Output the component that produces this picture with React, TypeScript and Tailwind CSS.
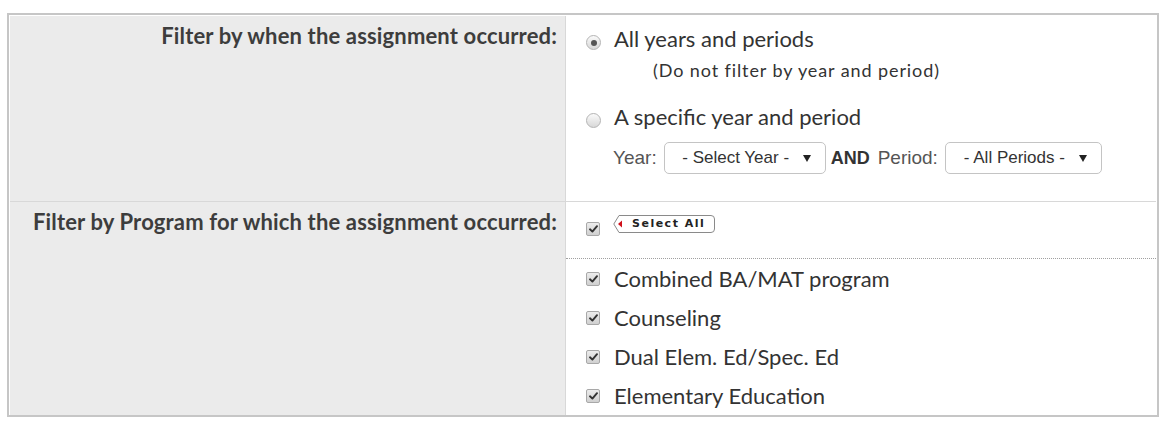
import React from "react";

const lato = { fontFamily: "Lato, 'Open Sans', sans-serif" };
const arial = { fontFamily: "'Liberation Sans', Arial, sans-serif" };

function Radio({ checked }: { checked?: boolean }) {
  return (
    <span className="mt-[9px] flex h-[15px] w-[15px] shrink-0 items-center justify-center rounded-full border border-[#b4b4b4] bg-gradient-to-b from-[#fafafa] to-[#d8d8d8]">
      {checked && <span className="h-[6px] w-[6px] rounded-full bg-[#555]" />}
    </span>
  );
}

function Check() {
  return (
    <span className="flex h-[14px] w-[14px] shrink-0 items-center justify-center rounded-[2px] border border-[#a8a8a8] bg-gradient-to-b from-[#ececec] to-[#d0d0d0]">
      <svg width="9" height="8" viewBox="0 0 9 8">
        <path d="M1 4.3 L3.4 6.6 L8 1.2" fill="none" stroke="#333" strokeWidth="1.9" strokeLinecap="round" strokeLinejoin="round" />
      </svg>
    </span>
  );
}

function SelectBox({ label, width }: { label: string; width: string }) {
  return (
    <span className={`flex h-[32px] ${width} shrink-0 items-center rounded-[5px] border border-[#c4c4c4] bg-white pl-[4px] pr-[14px] text-[17px] text-[#333]`} style={arial}>
      <span className="flex-1 text-center">{label}</span>
      <svg width="8" height="7" viewBox="0 0 8 7">
        <path d="M0 0 H8 L4 7 Z" fill="#222" />
      </svg>
    </span>
  );
}

function SelectAll() {
  return (
    <span className="relative flex h-[18px] w-[102px] items-center">
      <svg className="absolute left-0 top-0" width="102" height="18" viewBox="0 0 102 18">
        <path d="M6 0.5 H98 Q101.5 0.5 101.5 4 V14 Q101.5 17.5 98 17.5 H6 L0.8 9 Z" fill="#fff" stroke="#8a8a8a" strokeWidth="1" />
        <path d="M5 9 L9 5.5 V12.5 Z" fill="#d0101a" />
      </svg>
      <span className="relative pl-[19px] text-[11px] font-bold tracking-[1.5px] text-[#222]" style={{ fontFamily: "'DejaVu Sans', sans-serif" }}>
        Select All
      </span>
    </span>
  );
}

function Item({ text }: { text: string }) {
  return (
    <div className="flex h-[39px] items-center gap-[14px]">
      <Check />
      <span className="text-[22px] leading-[26px] text-[#333]" style={lato}>{text}</span>
    </div>
  );
}

export default function App() {
  return (
    <div className="h-[430px] w-[1168px] bg-white pl-[7px] pt-[13px]">
      <div className="w-[1152px] border-2 border-[#c6c6c6] bg-white px-px pt-px">
        <div className="flex border-b border-[#d8d8d8]">
          <div className="w-[556px] shrink-0 border-r border-[#d8d8d8] bg-[#ebebeb] pr-[8px] pt-[7px] text-right text-[22px] font-bold leading-[26px] tracking-[0.15px] text-[#3d3d3d]" style={lato}>
            Filter by when the assignment occurred:
          </div>
          <div className="h-[185px] flex-1 pl-[20px] pt-[10px]">
            <div className="flex items-start gap-[13px]">
              <Radio checked />
              <span className="text-[22px] leading-[26px] text-[#333]" style={lato}>All years and periods</span>
            </div>
            <div className="ml-[67px] mt-[7px] text-[18px] leading-[22px] tracking-[0.9px] text-[#333]" style={lato}>
              (Do not filter by year and period)
            </div>
            <div className="mt-[23px] flex items-start gap-[13px]">
              <Radio />
              <span className="text-[22px] leading-[26px] text-[#333]" style={lato}>A specific year and period</span>
            </div>
            <div className="ml-[27px] mt-[12px] flex items-center" style={arial}>
              <span className="mr-[7px] text-[19px] text-[#555]">Year:</span>
              <SelectBox label="- Select Year -" width="w-[162px]" />
              <span className="ml-[5px] text-[18px] font-bold text-[#333]">AND</span>
              <span className="ml-[8px] mr-[7px] text-[19px] text-[#555]">Period:</span>
              <SelectBox label="- All Periods -" width="w-[157px]" />
            </div>
          </div>
        </div>
        <div className="flex">
          <div className="w-[556px] shrink-0 border-r border-[#d8d8d8] bg-[#ebebeb] pr-[8px] pt-[7px] text-right text-[22px] font-bold leading-[26px] tracking-[0.15px] text-[#3d3d3d]" style={lato}>
            Filter by Program for which the assignment occurred:
          </div>
          <div className="h-[213px] flex-1">
            <div className="flex h-[56px] items-start gap-[13px] pl-[20px] pt-[13px]">
              <span className="mt-[7px] flex"><Check /></span>
              <SelectAll />
            </div>
            <div className="border-t border-dotted border-[#a0a0a0]" />
            <div className="pl-[20px]">
              <Item text="Combined BA/MAT program" />
              <Item text="Counseling" />
              <Item text="Dual Elem. Ed/Spec. Ed" />
              <Item text="Elementary Education" />
            </div>
          </div>
        </div>
      </div>
    </div>
  );
}
